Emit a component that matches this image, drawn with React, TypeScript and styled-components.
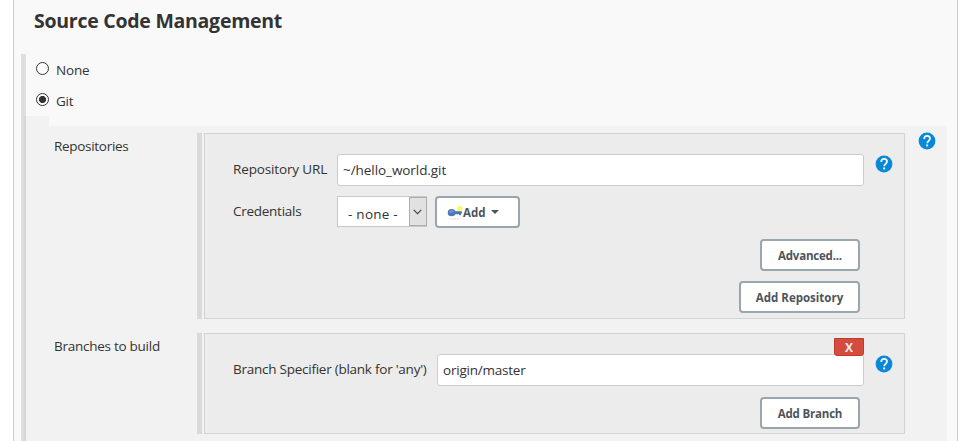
import React from "react";
import styled, { createGlobalStyle } from "styled-components";

const GlobalStyle = createGlobalStyle`
  *, *::before, *::after { box-sizing: border-box; }
  body {
    margin: 0;
    background: #fff;
    color: #333;
    font: 13.5px/20px "Open Sans", "Noto Sans", sans-serif;
    overflow: hidden;
  }
`;

const Panel = styled.section`
  width: 945px;
  height: 441px;
  margin-left: 13px;
  padding: 0 10px 0 7px;
  border: solid #ccc;
  border-width: 0 1px;
  background: #f9f9f9;
  overflow: hidden;
`;

const Title = styled.h1`
  height: 54px;
  margin: 0;
  padding: 7px 0 0 13px;
  font-size: 19.5px;
  line-height: 28px;
  font-weight: 700;
  letter-spacing: -0.26px;
`;

const Choices = styled.div`
  height: 387px;
  border-left: 5px solid #dfdfdf;
`;

const Choice = styled.label`
  display: flex;
  gap: 7px;
  height: 31px;
  padding: 6px 0 0 10px;
`;

const ChoiceText = styled.span`
  letter-spacing: -0.2px;
`;

const Radio = styled.input.attrs({ type: "radio", name: "scm" })`
  appearance: none;
  flex: none;
  width: 13px;
  height: 13px;
  margin: 2px 0 0;
  border: 1px solid #333;
  border-radius: 50%;
  background: #fff;

  &:checked {
    background: radial-gradient(circle, #333 3.2px, #fff 3.9px);
  }
`;

const Settings = styled.div`
  margin-left: -2px;
  height: 325px;
  border-left: 2px solid #d8d8d8;
`;

const Tab = styled.div`
  width: 23px;
  height: 10px;
  background: #f2f2f2;
`;

const SettingsBody = styled.div`
  display: flex;
  flex-direction: column;
  gap: 14px;
  height: 315px;
  padding: 7px 11px 0 28px;
  background: #f2f2f2;
`;

const Setting = styled.div`
  display: grid;
  grid-template-columns: 143px 708px 18px;
  align-items: start;
`;

const SettingName = styled.div<{ $spacing: number }>`
  padding-top: 3px;
  letter-spacing: ${(p) => p.$spacing}px;
`;

const Group = styled.div<{ $height: number }>`
  display: flex;
  gap: 2px;
  height: ${(p) => p.$height}px;

  &::before {
    content: "";
    width: 5px;
    background: #d9d9d9;
  }
`;

const GroupBox = styled.div`
  width: 701px;
  padding: 20px 11px 0 28px;
  border: 1px solid #d3d3d3;
  background: #ececec;
`;

const Field = styled.div<{ $label: number }>`
  position: relative;
  display: grid;
  grid-template-columns: ${(p) => p.$label}px 1fr 29px;
  height: 32px;
`;

const FieldLabel = styled.label<{ $spacing: number }>`
  padding-top: 5px;
  white-space: nowrap;
  letter-spacing: ${(p) => p.$spacing}px;
`;

const TextInput = styled.input<{ $spacing: number }>`
  width: 100%;
  height: 32px;
  padding: 0 5px;
  border: 1px solid #ccc;
  border-radius: 3px;
  background: #fff;
  color: #333;
  font: inherit;
  letter-spacing: ${(p) => p.$spacing}px;
  outline: 0;
`;

const Controls = styled.div`
  display: flex;
  gap: 8px;
`;

const Select = styled.div`
  display: flex;
  width: 90px;
  height: 31px;
  border: 1px solid #c8c8c8;
  background: #fff;
`;

const SelectValue = styled.span`
  flex: 1;
  padding: 7px 0 0 10px;
  white-space: nowrap;
  letter-spacing: 0.25px;
`;

const SelectArrow = styled.span`
  display: flex;
  align-items: center;
  justify-content: center;
  width: 18px;
  padding-right: 2px;
  margin-right: -1px;
  border: 1px solid #adadad;
  background: #e1e1e1;
`;

const Button = styled.button<{ $width: number; $spacing?: number }>`
  display: flex;
  align-items: center;
  justify-content: center;
  width: ${(p) => p.$width}px;
  height: 32px;
  padding: 2px 0 0;
  border: 2px solid #98a6af;
  border-radius: 4px;
  background: #fff;
  color: #4d545d;
  font: 700 11.5px/16px "Open Sans", "Noto Sans", sans-serif;
  letter-spacing: ${(p) => p.$spacing ?? 0}px;
  white-space: nowrap;
`;

const AddButton = styled(Button)`
  justify-content: flex-start;
  padding-left: 10px;
`;

const Caret = styled.svg`
  margin: 0 0 2px 5px;
`;

const Actions = styled.div`
  display: flex;
  flex-direction: column;
  align-items: flex-end;
  gap: 10px;
  padding: 11px 33px 0 0;
`;

const HelpCell = styled.div<{ $top: number; $left: number }>`
  margin: ${(p) => p.$top}px 0 0 ${(p) => p.$left}px;
  line-height: 0;
`;

const Delete = styled.button`
  position: absolute;
  top: -16px;
  right: 29px;
  width: 30px;
  height: 18px;
  padding: 0;
  border: 1px solid #c23a2c;
  border-radius: 0 0 3px 3px;
  background: #d54b3d;
  color: #eee;
  font: 700 12px/17px "Open Sans", "Noto Sans", sans-serif;
`;

const Spacer = styled.div`
  height: 10px;
`;

function Help() {
  return (
    <svg width="18" height="18" viewBox="0 0 18 18" aria-label="Help">
      <circle cx="9" cy="9" r="8.4" fill="#0788d8" />
      <path d="M6.2 7C6.2 5 7.4 3.9 9.1 3.9s2.9 1.1 2.9 2.7c0 2.1-2.8 2.3-2.8 4.7" fill="none" stroke="#fff" strokeWidth="1.7" />
      <rect x="8.2" y="12.5" width="1.9" height="1.9" fill="#fff" />
    </svg>
  );
}

function KeyIcon() {
  return (
    <svg width="16" height="16" viewBox="0 0 16 16">
      <ellipse cx="8" cy="14" rx="6" ry="0.9" fill="#eeeeee" />
      <path d="M7 6.3h7.8v2.5h-1v1.4h-1.6V9.2H7z" fill="#4774b3" />
      <ellipse cx="4.6" cy="7.7" rx="3.9" ry="3.6" fill="#4b78b8" />
      <ellipse cx="4.3" cy="6.5" rx="2.4" ry="1.5" fill="#6c94ca" />
      <circle cx="12.6" cy="3.5" r="2.5" fill="#fff83c" />
      <circle cx="12.6" cy="3.5" r="0.9" fill="#fffccc" />
    </svg>
  );
}

export default function App() {
  return (
    <>
      <GlobalStyle />
      <Panel>
        <Title>Source Code Management</Title>
        <Choices>
          <Choice>
            <Radio />
            <ChoiceText>None</ChoiceText>
          </Choice>
          <Choice>
            <Radio defaultChecked />
            <ChoiceText>Git</ChoiceText>
          </Choice>
          <Settings>
            <Tab />
            <SettingsBody>
              <Setting>
                <SettingName $spacing={-0.3}>Repositories</SettingName>
                <Group $height={186}>
                  <GroupBox>
                    <Field $label={104}>
                      <FieldLabel $spacing={-0.14}>Repository URL</FieldLabel>
                      <TextInput $spacing={-0.06} defaultValue="~/hello_world.git" />
                      <HelpCell $top={1} $left={11}><Help /></HelpCell>
                    </Field>
                    <Spacer />
                    <Field $label={104}>
                      <FieldLabel $spacing={-0.27}>Credentials</FieldLabel>
                      <Controls>
                        <Select>
                          <SelectValue>- none -</SelectValue>
                          <SelectArrow>
                            <svg width="9" height="6" viewBox="0 0 9 6">
                              <path d="M.7.8 4.5 4.6 8.3.8" fill="none" stroke="#444" strokeWidth="1.2" />
                            </svg>
                          </SelectArrow>
                        </Select>
                        <AddButton $width={85}>
                          <KeyIcon />
                          Add
                          <Caret width="8" height="4" viewBox="0 0 8 4">
                            <path d="M0 0h8L4 4z" fill="#4d545d" />
                          </Caret>
                        </AddButton>
                      </Controls>
                    </Field>
                    <Actions>
                      <Button $width={100} $spacing={-0.2}>Advanced...</Button>
                      <Button $width={121}>Add Repository</Button>
                    </Actions>
                  </GroupBox>
                </Group>
                <HelpCell $top={-1} $left={13}><Help /></HelpCell>
              </Setting>
              <Setting>
                <SettingName $spacing={-0.26}>Branches to build</SettingName>
                <Group $height={101}>
                  <GroupBox>
                    <Field $label={204}>
                      <FieldLabel $spacing={-0.25}>Branch Specifier (blank for 'any')</FieldLabel>
                      <TextInput $spacing={-0.22} defaultValue="origin/master" />
                      <HelpCell $top={1} $left={11}><Help /></HelpCell>
                      <Delete>X</Delete>
                    </Field>
                    <Actions>
                      <Button $width={100} $spacing={-0.2}>Add Branch</Button>
                    </Actions>
                  </GroupBox>
                </Group>
              </Setting>
            </SettingsBody>
          </Settings>
        </Choices>
      </Panel>
    </>
  );
}
